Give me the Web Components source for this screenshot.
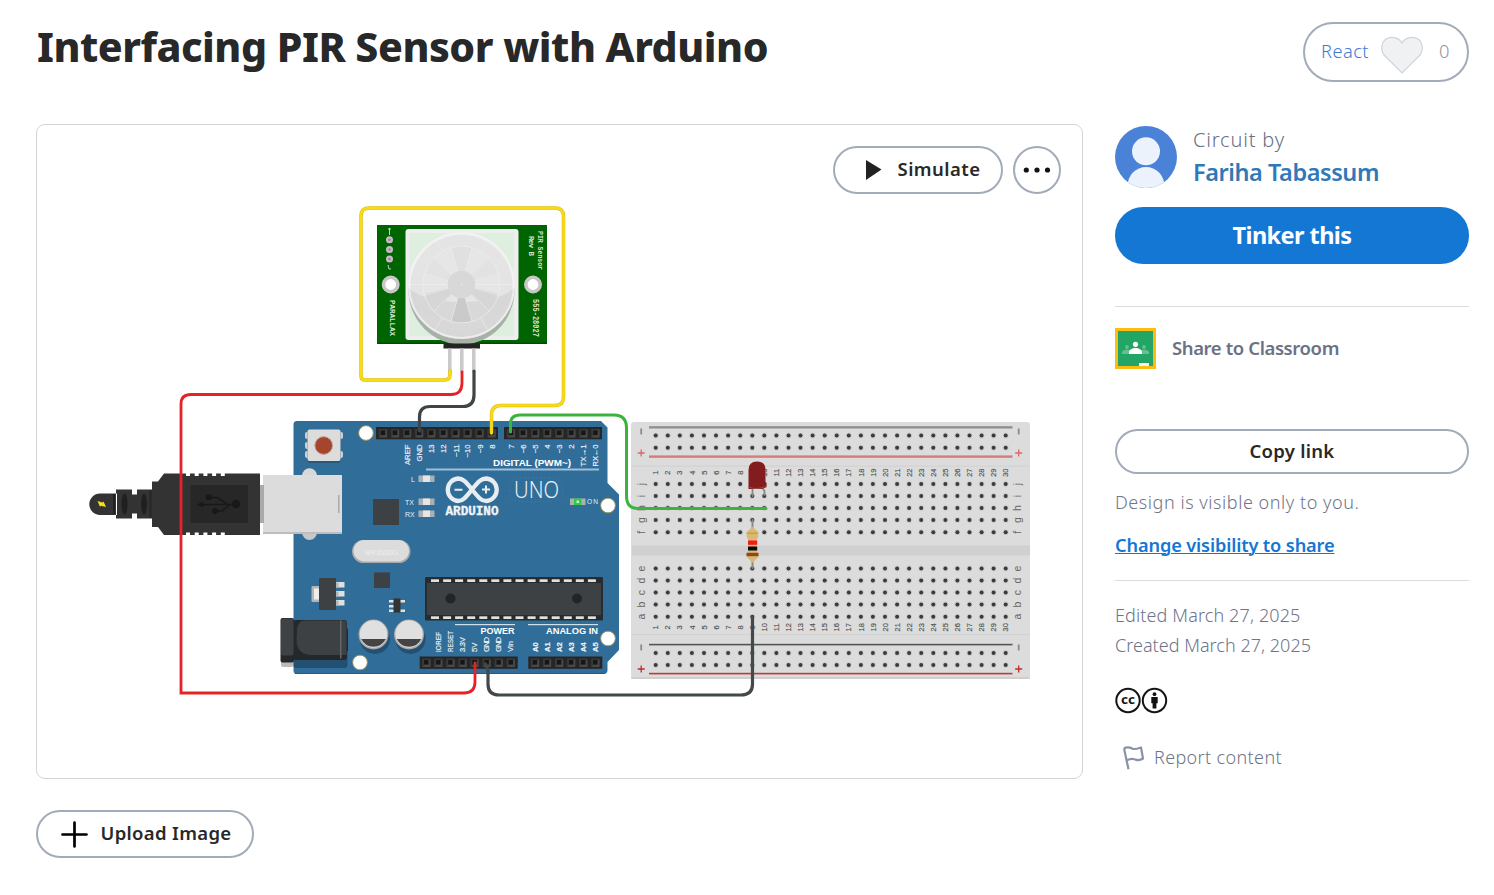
<!DOCTYPE html>
<html lang="en">
<head>
<meta charset="utf-8">
<title>Interfacing PIR Sensor with Arduino</title>
<style>
html,body{margin:0;background:#fff}
body{font-family:"Noto Sans","Open Sans",sans-serif;color:#282828;overflow:hidden}
</style>
</head>
<body>
<design-page></design-page>
<script>
const define=(name,html,setup)=>customElements.define(name,class extends HTMLElement{
  constructor(){super();this.attachShadow({mode:'open'}).innerHTML=html;}
  connectedCallback(){if(setup)setup.call(this);}
});

/* One line of text tracked to an exact measure. */
define('fit-text',`<style>:host{display:inline-block;white-space:nowrap}</style><span><slot></slot></span>`,function(){
  const target=+this.getAttribute('w'),n=this.textContent.length;
  const span=this.shadowRoot.querySelector('span');
  const natural=span.getBoundingClientRect().width;
  this.style.letterSpacing=((target-natural)/n).toFixed(3)+'px';
});

define('pill-button',`<style>
:host{display:flex;align-items:center;justify-content:center;box-sizing:border-box;border:2px solid #a2abb9;border-radius:40px;background:#fff;color:#282828;font-size:18.5px;font-weight:600;line-height:26px}
:host([primary]){background:#1477d4;border-color:#1477d4;color:#fff;font-size:23.5px;font-weight:700}
</style><slot></slot>`);

define('react-counter',`<style>
:host{display:flex;align-items:center;box-sizing:border-box;width:166px;height:60px;border:2px solid #a2abb9;border-radius:30px;padding-left:16px;font-size:18.3px;font-weight:350;line-height:26px;color:#3f7bd6}
svg{margin:5px 0 0 11px}.n{margin-left:15px;color:#8e939c}
fit-text{margin-top:-2px}
</style><fit-text w="48">React</fit-text><svg width="44" height="38" viewBox="0 0 44 38"><path d="M22 7C25 1.5 32 .2 37 2.500C42.500 5.500 44 13 40 19L22 37 4 19C0 13 1.500 5.500 7 2.500C12 .2 19 1.500 22 7Z" fill="#f0f1f3" stroke="#cfd4da" stroke-width="1.200"/></svg><fit-text class="n" w="12">0</fit-text>`);

define('user-avatar',`<style>:host{display:block;width:62px;height:62px;border-radius:50%;overflow:hidden;flex:none}svg{display:block}</style>
<svg width="62" height="62"><rect width="62" height="62" fill="#4a82d8"/><circle cx="31" cy="25.300" r="14" fill="#ebf2fb"/><ellipse cx="31" cy="60" rx="18.500" ry="19" fill="#ebf2fb"/></svg>`);

define('author-card',`<style>
:host{display:flex;gap:16px;height:62px}
.t{display:flex;flex-direction:column;align-items:flex-start;margin-top:-3px}
.a{font-size:20px;font-weight:350;line-height:33px;color:#67708a}.b{font-size:23.500px;font-weight:600;line-height:32px;color:#3079b8}
</style><user-avatar></user-avatar><div class="t"><fit-text class="a" w="92">Circuit by</fit-text><fit-text class="b" w="186">Fariha Tabassum</fit-text></div>`);

define('classroom-share',`<style>
:host{display:flex;align-items:center;gap:16px;height:41px;font-size:18.500px;font-weight:600;color:#6a7286;line-height:26px}
svg{flex:none}fit-text{margin-top:-1px}
</style><svg width="41" height="41"><rect width="41" height="41" fill="#fbbc14"/><rect x="3" y="3" width="35" height="35" fill="#22a565"/><path d="M24 35h10v3h-10z" fill="#f3f3f1"/><g fill="#64bf91"><circle cx="12" cy="19" r="1.900"/><circle cx="29" cy="19" r="1.900"/><path d="M7 26v-2q1-2.500 5-2.500 4 0 5 2v2.500zM24 26v-2.500q2-2 5-2 4 0 5 2.500v2z"/></g><circle cx="20.500" cy="16.300" r="2.600" fill="#fff"/><path d="M14 26v-1.500c0-6 13-6 13 0v1.500z" fill="#fff"/></svg><fit-text w="167">Share to Classroom</fit-text>`);

define('license-badges',`<style>:host{display:block;height:27px}svg{display:block}text{font:700 13px "Noto Sans",sans-serif}</style>
<svg width="54" height="27" fill="none" stroke="#151515"><circle cx="13" cy="13.500" r="11.700" stroke-width="2"/><circle cx="39.500" cy="13.500" r="11.700" stroke-width="2"/>
<text x="13" y="17.200" text-anchor="middle" textLength="14" lengthAdjust="spacingAndGlyphs" fill="#151515" stroke="none">cc</text>
<g fill="#111" stroke="none"><circle cx="39.500" cy="7.200" r="1.900"/><path d="M36.300 10h6.400v6.300h-1.300v5.200h-3.800v-5.200h-1.300z"/></g></svg>`);

define('report-link',`<style>:host{display:flex;align-items:center;height:30px;padding-left:8px;font-size:18px;font-weight:350;color:#6d7588}svg{margin:2px 10px 0 0}</style>
<svg width="21" height="24" fill="none" stroke="#8992a6" stroke-width="2.200" stroke-linejoin="round"><path d="M1 2.300L5.500 23.300M1 2.500C5 0 7 1.500 9.500 2.700 12 3.700 15 2.500 18 1.500L20 12.500C16 15.300 14 14 11.500 13.300 9 12.500 6.500 13 3.500 14.500"/></svg><fit-text w="128">Report content</fit-text>`);

define('design-sidebar',`<style>
:host{display:flex;flex-direction:column;width:354px;padding-top:2px;font-size:18px;font-weight:350;line-height:30px;color:#6d7588}
hr{margin:0;border:0;height:1px;background:#dadcdf;flex:none}
.tinker{height:57px;margin-top:19px}.tinker fit-text{margin-top:-2px}
.d1{margin-top:42px}classroom-share{margin-top:21px}
.copy{height:45px;margin-top:60px}.copy fit-text{margin-top:-1px}
.vis{margin-top:13px;align-self:flex-start}
.chg{margin-top:13px;align-self:flex-start;color:#1477d4;font-size:18.200px;font-weight:600;text-decoration:underline;text-underline-offset:1px;text-decoration-thickness:1px}
.d2{margin-top:20px}.dates{display:flex;flex-direction:column;align-items:flex-start;margin-top:19px}
license-badges{margin-top:27px}report-link{margin-top:28px}
</style>
<author-card></author-card>
<pill-button class="tinker" primary><fit-text w="119">Tinker this</fit-text></pill-button>
<hr class="d1"><classroom-share></classroom-share>
<pill-button class="copy"><fit-text w="85">Copy link</fit-text></pill-button>
<fit-text class="vis" w="244.500">Design is visible only to you.</fit-text>
<fit-text class="chg" w="219.500">Change visibility to share</fit-text>
<hr class="d2"><div class="dates"><fit-text w="185.500">Edited March 27, 2025</fit-text><fit-text w="196">Created March 27, 2025</fit-text></div>
<license-badges></license-badges><report-link></report-link>`);

/* ---- circuit drawing ---- */
const P=12.069, R=(n,f)=>Array.from({length:n},(_,i)=>f(i)).join('');
const rect=(x,y,w,h,f,r=0,o='')=>`<rect x="${x}" y="${y}" width="${w}" height="${h}" rx="${r}" fill="${f}" ${o}/>`;
const circ=(x,y,r,f,o='')=>`<circle cx="${x}" cy="${y}" r="${r}" fill="${f}" ${o}/>`;
const vtxt=(x,y,t,o='')=>`<text transform="translate(${x} ${y}) rotate(-90)" ${o}>${t}</text>`;
const wire=(d,c,w=3.200)=>`<path d="${d}" fill="none" stroke="${c}" stroke-width="${w}" stroke-linecap="round"/>`;

function breadboard(){
  const rows=[435.500,447.700,484,496,508,520,532.200,568.500,580.500,592.500,604.500,616.700,653,665];
  const letters='jihgfedcba';
  return rect(631,422,399,257,'#dcdcdc',3)+rect(631,677,399,2,'#cfcfcf',1)
  +rect(631,465.500,399,1.200,'#d2d2d2')+rect(631,634,399,1.200,'#d2d2d2')+rect(632,545.500,398,10,'#d0d0d0')
  +rect(649,426.200,363.500,2.300,'#8e8e8e')+rect(649,455.400,363.500,2.400,'#d87b7b')
  +rect(649,643.800,363.500,1.600,'#555')+rect(649,672.800,363.500,1.600,'#bb3b3b')
  +rows.map(y=>R(30,i=>{const x=(655.700+P*i).toFixed(1);return circ(x,y,2.900,'#cccccc')+circ(x,y,2,'#3b3b3b')})).join('')
  +`<g font-size="7.500" fill="#555" stroke="#555" stroke-width=".15" text-anchor="middle">`+R(30,i=>vtxt((658.300+P*i).toFixed(1),472.700,i+1)+vtxt((658.300+P*i).toFixed(1),627.300,i+1))+`</g>`
  +`<g font-size="10.500" fill="#666" text-anchor="middle">`+[...letters].map((c,i)=>vtxt(645,rows[i+2],c)+vtxt(1021,rows[i+2],c)).join('')+`</g>`
  +[641.200,1018.700].map(x=>[[431.500,453],[647.500,669]].map(([a,b],i)=>rect(x-.9,a-3,1.800,6,'#8a8a8a')+`<path d="M${x-3.500} ${b}h7M${x} ${b-3.500}v7" stroke="${i?'#c22a2a':'#d66'}" stroke-width="1.300"/>`).join('')).join('');
}
const header=(x,y,w,x0,n)=>rect(x,y,w,12.300,'#262626')+R(n,i=>{const a=x0+P*i;return rect(a-4.200,y+2,8.400,8.400,'#393939')+`<path d="M${a-4} ${y+10.400}h8v-8z" fill="#555" opacity=".6"/>`+rect(a-2.200,y+3.500,4.400,4.600,'#161616')});
function uno(){
  const lab=(a)=>a.map(([x,t,l])=>vtxt(x+2.600,444.500,t,'text-anchor="end"'+(l?` textLength="${l}" lengthAdjust="spacingAndGlyphs"`:''))).join('');
  const hole=(x,y)=>circ(x,y,7.400,'#fff','stroke="#8f8a58" stroke-width="1"');
  const led=(x,y)=>rect(x,y,16,6.500,'#a9b0b5')+rect(x+4.500,y,7,6.500,'#e5e5e5');
  const cap=x=>`<circle cx="${x+1.500}" cy="639" r="15" fill="#235073"/>`+circ(x,634.500,15,'#aaa')+circ(x,634,13.700,'#e0e0e0')+`<path d="M${x-12.300} 639h24.600a13.700 13.700 0 0 1-24.600 0z" fill="#444"/>`;
  return `<path d="M297 421H601L607.500 427.500V483L619 494.500V650L607.500 662V670Q607.500 674 603.500 674H297Q293.500 674 293.500 670.500V424.500Q293.500 421 297 421Z" fill="#316d99"/><path d="M295 673.500H605" stroke="#285b82"/>`
  // reset button
  +[432,442,451].map(y=>rect(305,y,5,7,'#cfcfcf',2)).join('')+[432,451].map(y=>rect(338,y,5,7,'#cfcfcf',2)).join('')+rect(307.500,430,33,33,'#285878',2)+rect(307.500,429.500,33,31.500,'#dcdcdc',2)+circ(323.700,445.500,8.900,'#a5462c','stroke="#c8a8a0" stroke-width="1"')
  // usb port
  +circ(309.500,475.700,7.500,'#d8d8d8')+circ(309.500,532.500,7.500,'#c8c8c8')+rect(263,475,79,59,'#bdbdbd')+rect(263,475,79,57,'#dcdcdc')+rect(338,495,1.500,18,'#aaa')
  // chips
  +rect(373,499,26,26,'#3d4144')+rect(374,572.500,16,15.500,'#3d4144')
  +rect(352,540,58.500,23,'#a8aaab',11.500)+rect(353.500,540,55.500,21.500,'#dcdcdc',10.700)+`<text x="381" y="554.500" font-size="7.500" fill="#ececec" text-anchor="middle" textLength="34">SPK16.000G</text>`
  +rect(311.500,586,9,16,'#b5b5b5',1)+rect(314,588.500,6,11,'#eee')+[582,591,600].map(y=>rect(335,y,9.500,5.500,'#e0e0e0')+rect(335,y+.5,3.500,5,'#b5b5b5')).join('')+rect(319,578,17,32,'#3d4144',1)
  +[600,605,609.500].map(y=>rect(389,y,5,2.500,'#e0e0e0')).join('')+[600,609.500].map(y=>rect(400,y,5,2.500,'#e0e0e0')).join('')+rect(393.500,598.500,7,14,'#333')
  // power jack
  +rect(281,650,12.500,17,'#bbb',2)+rect(293.500,640,54,28,'#234f70',3)+rect(340,628,8,24,'#24282a',2)+rect(280.500,618,13.500,44.500,'#24282a',2)+rect(293,620,54,40,'#24282a',3)+rect(281,618.500,12.500,37,'#3e4245',2)+`<path d="M297 629Q298 620.500 305 620.500H344Q346.500 620.500 346.500 623V655H312Q297 655 296.500 640Z" fill="#3d4144"/>`+rect(340,620.500,1.500,38,'#62666a')
  +cap(373.500)+cap(409)
  // microcontroller
  +rect(425,577,178,43.500,'#282c2e',1)+rect(427,583,174,32,'#3e4143')+R(14,i=>rect((431+P*i).toFixed(1),579.300,8,2.700,'#e0e0e0')+rect((431+P*i).toFixed(1),616.300,8,2.700,'#e0e0e0'))+circ(450.500,598.500,5,'#222526')+circ(577,598.500,5,'#222526')
  +header(376,427,122,383,10)+header(504,427,98,511,8)+header(419.700,656.500,98,426.300,8)+header(528.300,656.500,74,535,6)
  +hole(366,433)+hole(608,505.500)+hole(608,638.500)+hole(360,662.500)
  +rect(426,468.500,173,2,'#9ec0d8')+rect(455,624,60,1.200,'#cfe0ec')+rect(528,624,70,1.200,'#cfe0ec')
  +`<g fill="#eef3f7" font-size="7.700" stroke="#eef3f7" stroke-width=".15">`
  +lab([[407,'AREF'],[419.500,'GND'],[431.500,'13'],[443.500,'12'],[456,'~11'],[467.500,'~10'],[480,'~9'],[492,'8'],[511,'7'],[523,'~6'],[535,'~5'],[547,'4'],[559.500,'~3'],[571,'2'],[583.500,'TX→1',22],[595.500,'RX←0',22]])
  +['IOREF','RESET','3.3V','5V','GND','GND','Vin'].map((t,i)=>vtxt(441+P*i,652,t,['textLength="20" lengthAdjust="spacingAndGlyphs"','textLength="21" lengthAdjust="spacingAndGlyphs"','textLength="15"','','textLength="15"','textLength="15"',''][i])).join('')
  +`<g font-weight="bold">`+R(6,i=>vtxt(538+P*i,652,'A'+i))+`</g></g>`
  +`<g fill="#fff" font-weight="bold" font-size="9"><text x="493" y="466" textLength="78" lengthAdjust="spacingAndGlyphs">DIGITAL (PWM~)</text><text x="480.500" y="634" textLength="34" lengthAdjust="spacingAndGlyphs">POWER</text><text x="546" y="634" textLength="52" lengthAdjust="spacingAndGlyphs">ANALOG IN</text></g>`
  +`<g fill="#e4edf4" font-size="7"><text x="411" y="481.500">L</text><text x="405" y="504.500">TX</text><text x="405" y="516.500">RX</text><text x="587" y="504.300" font-size="6.500" textLength="11">ON</text></g>`
  +led(418.500,475.500)+led(418.500,498.500)+led(418.500,510.500)+rect(570,498.500,15.500,6.500,'#a8b5ae')+rect(574,498.500,7.500,6.500,'#35c84a')+rect(576.500,500.500,2.500,2.500,'#c0ffc0')
  +`<path d="M472 489.500C466 482 463 478.500 458 478.500A11.300 11.300 0 0 0 458 501C463 501 466 497 472 489.500C478 482 481 478.500 486.500 478.500A11.300 11.300 0 0 1 486.500 501C481 501 478 497 472 489.500Z" fill="none" stroke="#e7edf1" stroke-width="4.300"/><path d="M454.500 489.800h8M482 489.500h8M486 485.500v8" stroke="#e7edf1" stroke-width="2"/>`
  +`<text x="445.500" y="514.500" font-family="Liberation Mono,monospace" font-weight="bold" font-size="12" fill="#f2f5f7" stroke="#f2f5f7" stroke-width=".3" textLength="53" lengthAdjust="spacingAndGlyphs">ARDUINO</text>`
  +`<text x="514" y="498" font-family="Noto Sans,sans-serif" font-weight="350" font-size="23" fill="#e9f0f5" textLength="45" lengthAdjust="spacingAndGlyphs">UNO</text>`
  +rect(509,477.500,54,24,'none',11,'stroke="#467ba2" stroke-width=".6" stroke-dasharray="2 2"');
}
function usbPlug(){
  return rect(260,485,4,38,'#aaa')
  +`<path d="M117 493.500H100A10.700 10.700 0 0 0 100 515H117ZM116 489.500H132V494.500H137V489.500H152V481.500H158L164 473.500H260V535H164L158 527H152V518.500H137V513.500H132V518.500H116Z" fill="#333"/>`
  +R(5,i=>rect(186+8.700*i,472.500,4,3.500,'#fff')+rect(186+8.700*i,532.500,4,3.500,'#fff'))+rect(113,494,2,20,'#222')+rect(149.500,490,2,28,'#262626')
  +`<ellipse cx="124.500" cy="504" rx="3" ry="10.500" fill="#202020"/><ellipse cx="144" cy="504" rx="3" ry="10.500" fill="#202020"/>`
  +rect(190.500,485,57.500,38,'#272727')+`<g stroke="#181818" fill="none" stroke-width="1.600"><path d="M200 504.500H236M228 504.500L217 497.500H208M230 504.500L222 511H215"/></g>`+circ(236,504,4.300,'#181818')+circ(215,511,3,'#181818')+rect(206,494.500,5.500,5.500,'#181818')+`<path d="M197 504.500l6-3v6z" fill="#181818"/><path d="M97.500 501l5 1.500 1-1 2.500 5.500-5-1.300-1 1z" fill="#f5df20"/>`;
}
function pir(){
  const pol=(r,a)=>[(461.500+r*Math.cos(a)).toFixed(1),(284.500+r*Math.sin(a)).toFixed(1)];
  const ray=(d,r1,r2)=>{const a=d*Math.PI/180;return `M${pol(r1,a)}L${pol(r2,a)}`};
  const sector=(d)=>{const a=(d-16)*Math.PI/180,b=(d+16)*Math.PI/180;return `M${pol(13.500,a)}L${pol(38,a)}A38 38 0 0 1 ${pol(38,b)}L${pol(13.500,b)}Z`};
  return rect(377,225,170,119,'#006400')+rect(377,342.500,170,1.500,'#004d00')
  +rect(405.500,229,113,111,'#eeeeee',3)+rect(409.500,233,104.500,103,'#deeedf')
  +`<clipPath id="pc"><rect x="406" y="229" width="112" height="115"/></clipPath><g clip-path="url(#pc)"><ellipse cx="461.500" cy="290" rx="53" ry="54.500" fill="#a7b1a8"/></g>`
  +`<clipPath id="dome"><circle cx="461.500" cy="285.500" r="53.500"/></clipPath><g clip-path="url(#dome)">`
  +rect(400,225,125,125,'#eeeeee')+circ(461.500,286,51,'#e4e4e4')+circ(461.500,285,38.500,'#e6e6e6')
  +`<path d="M405 284Q419 302 461.500 302T518 284V345H405Z" fill="#d3d3d3" opacity=".75"/><path d="M407 292C413 344 510 344 516 292C506 331 417 331 407 292Z" fill="#d8d8d8"/>`
  +`<path d="${sector(-90)}" fill="#e0e0e0"/><path d="${sector(90)}" fill="#cacaca"/><path d="${sector(-30)}${sector(210)}" fill="#e2e2e2"/><path d="${sector(30)}${sector(150)}" fill="#d6d6d6"/>`
  +`<g fill="none" stroke="#eeeeee" stroke-width=".7"><circle cx="461.500" cy="284.500" r="38.500"/><path d="${[0,180,-106,-74,-44,-16,196,224,16,44,74,106,136,164].map(d=>ray(d,13.500,38.500)).join('')}${[0,180,-60,-120,60,120].map(d=>ray(d,38.500,52)).join('')}"/></g></g>`
  +circ(461.500,285.500,52.300,'none','stroke="#f5f5f5" stroke-width="1.800" opacity=".7"')
  +circ(461.500,284.500,13.800,'#d8d8d8')+circ(461.500,284.500,.8,'#eee')
  +[390.700,533].map(x=>circ(x,284.500,7.200,'#fff','stroke="#c7c7c7" stroke-width="3.600"')).join('')+[239.700,249.500,259].map(y=>circ(389.500,y,3.500,'#c7bcc7')+circ(389.500,y,1.300,'#998899')).join('')
  +`<g fill="#d5e3d5" font-size="7.500" font-family="Liberation Mono,monospace" font-weight="bold"><text transform="translate(538 231) rotate(90)" textLength="39" lengthAdjust="spacingAndGlyphs">PIR Sensor</text><text transform="translate(528.500 236) rotate(90)" textLength="20">Rev B</text><text transform="translate(532.500 299) rotate(90)" font-size="8.500" textLength="38" lengthAdjust="spacingAndGlyphs">555-28027</text><text transform="translate(389.500 300) rotate(90)" textLength="36">PARALLAX</text></g><path d="M389.500 228v7M388 229h3M388 265l1 4h2" stroke="#ccc" fill="none"/>`
  +rect(443.500,343.500,36.500,5,'#242424')+[448,460,472].map(x=>rect(x,348.500,3.600,24,'#cacaca')).join('');
}
function parts(){
  return wire('M752.500 520V532M752.500 560V568','#8a8a8a',2)
  +`<path d="M749 530L752.500 526.500 756 530 758.300 532V537L756.500 540V551L758.300 554V557L753 562.500H752L746.700 557V554L748.500 551V540L746.700 537V532Z" fill="#dcb878"/>`+rect(746.700,532.500,11,1.600,'#c8a341')+rect(748,540.500,9.200,4.300,'#f31b12')+rect(748,546.500,9.200,4,'#0b0b0b')+rect(746.500,552.800,12,3.400,'#8b4a16')
  +wire('M752.500 486V496M761 486L764.500 491V495','#888',1.800)
  +`<path d="M748.500 489V470Q748.500 461.500 757 461.500T765.500 470V482L766.500 483V487Q765 489 757.500 489T748.500 489Z" fill="#831c1e"/><path d="M748.500 487Q757 490.500 766.500 486" stroke="#a04a4a" fill="none"/>`;
}
function wires(){
  const yellow='M450 371V374.500Q450 380 444.500 380H365Q361 380 361 376V216Q361 208 369 208H555Q563.500 208 563.500 216V397Q563.500 405.500 555 405.500H501Q491.500 405.500 491.500 415V433';
  return wire(yellow,'#dcbb14',3.500)+wire(yellow,'#f9da16',2.500)
  +wire('M462 372V383Q462 394.500 451 394.500H191Q181 394.500 181 404V693H464Q475 693 475 682V663','#e62226',2.800)
  +wire('M474 371V395Q474 406.500 463 406.500H430Q419.500 406.500 419.500 417V431','#3f4447')
  +wire('M485.500 664L488 670V684Q488 695 499 695H741Q752.500 695 752.500 684V617','#43484a')
  +wire('M510.500 432V424Q510.500 415 520 415H614Q626.500 415 626.500 428V496Q626.500 508.500 638 508.500H766','#3db33f',3);
}
define('circuit-drawing',`<style>:host{display:block}svg{display:block}</style><svg width="1045" height="653" viewBox="37 125 1045 653" font-family="Liberation Sans,sans-serif">${breadboard()+uno()+usbPlug()+pir()+parts()+wires()}</svg>`);

define('design-viewer',`<style>
:host{display:block;position:relative;box-sizing:border-box;width:1047px;height:655px;border:1px solid #d0d5da;border-radius:9px;overflow:hidden}
.tools{position:absolute;top:21px;right:21px;display:flex;gap:10px}
.sim{width:170px;height:48px}.sim svg{margin:0 16px 0 9px}.sim fit-text{margin-top:-2px}.more{width:48px;height:48px}
</style><circuit-drawing></circuit-drawing><div class="tools"><pill-button class="sim"><svg width="17" height="20"><path d="M1 0L16.500 9.500 1 20Z" fill="#222"/></svg><fit-text w="83">Simulate</fit-text></pill-button>
<pill-button class="more"><svg width="28" height="6"><g fill="#111"><circle cx="3.300" cy="3" r="2.600"/><circle cx="14" cy="3" r="2.600"/><circle cx="24.500" cy="3" r="2.600"/></g></svg></pill-button></div>`);

define('design-page',`<style>
:host{display:block;box-sizing:border-box;width:1494px;height:895px;padding:22px 25px 0 36px}
header{display:flex;justify-content:space-between;height:60px}
h1{margin:0;padding-left:1px;font-size:41px;font-weight:800;line-height:48px;color:#282828}
main{display:grid;grid-template-columns:1047px 354px;gap:32px;margin-top:42px;height:655px}
.up{width:218px;height:48px;margin-top:31px}.up svg{margin:0 13px 0 2px}.up fit-text{margin-top:-3px}
</style><header><h1><fit-text w="731">Interfacing PIR Sensor with Arduino</fit-text></h1><react-counter></react-counter></header>
<main><design-viewer></design-viewer><design-sidebar></design-sidebar></main>
<pill-button class="up"><svg width="27" height="27"><path d="M13.500 1.500V25.500M1.500 13.500H25.500" stroke="#000" stroke-width="2.700" stroke-linecap="round"/></svg><fit-text w="131">Upload Image</fit-text></pill-button>`);
</script>
</body>
</html>
